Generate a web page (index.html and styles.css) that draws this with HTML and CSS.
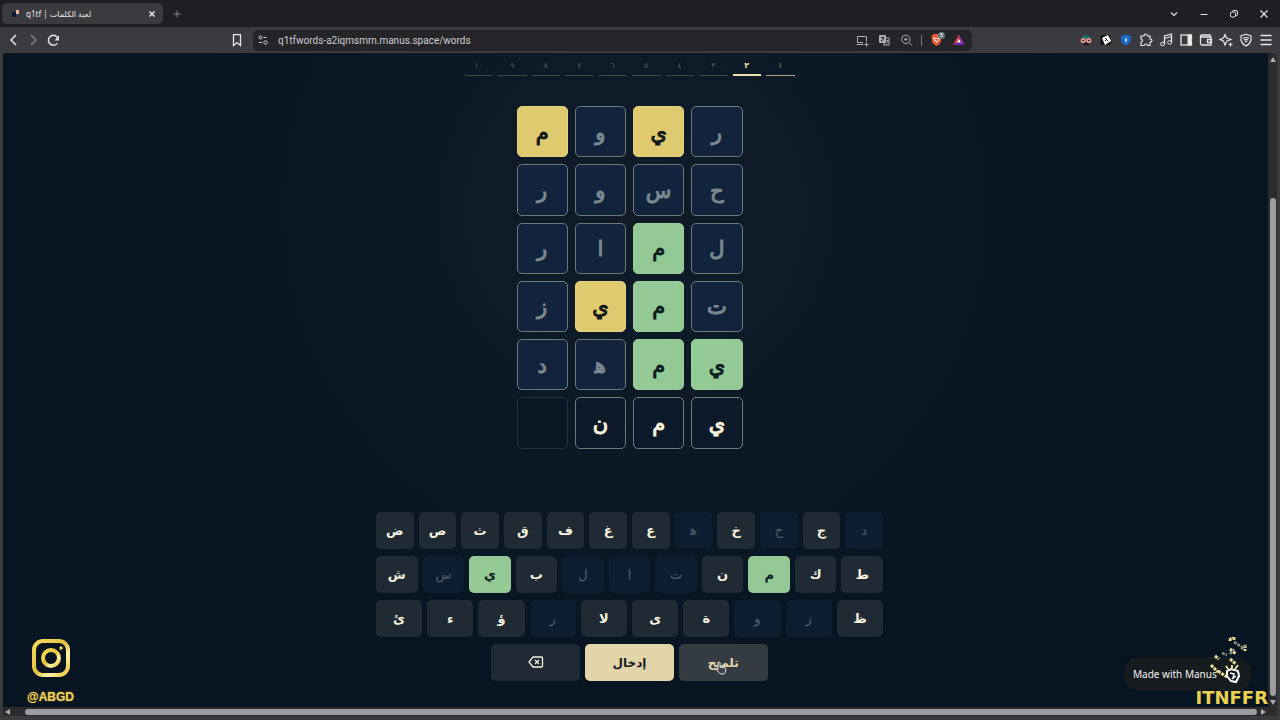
FILE: index.html
```html
<!DOCTYPE html>
<html lang="ar">
<head>
<meta charset="utf-8">
<meta name="viewport" content="width=device-width, initial-scale=1">
<title>لعبة الكلمات | q1tf</title>
<link rel="stylesheet" href="styles.css">
</head>
<body>
<div class="browser">
  <header class="tabs">
    <div class="tab">
      <svg class="favicon" viewBox="0 0 8 8" aria-hidden="true"><path fill="#091a30" d="M0 2h5v5H0z"/><path fill="#efb9a0" d="M4 0h3v4H4z"/><path fill="#263f5c" d="M4 4h3v2H4z"/></svg>
      <span class="tab-title" dir="ltr">q1tf | <bdi>لعبة الكلمات</bdi></span>
      <button class="icon-btn" aria-label="Close tab"><svg viewBox="0 0 16 16"><path stroke-width="1.500" d="M5.500 5.500l5 5M10.500 5.500l-5 5"/></svg></button>
    </div>
    <button class="icon-btn dim" aria-label="New tab"><svg viewBox="0 0 16 16"><path d="M8 4.500v7M4.500 8h7"/></svg></button>
    <div class="window-controls">
      <button class="icon-btn" aria-label="Search tabs"><svg viewBox="0 0 16 16"><path stroke-width="1.200" d="M5 6.500l3 3 3-3"/></svg></button>
      <button class="icon-btn" aria-label="Minimize"><svg viewBox="0 0 16 16"><path d="M4.500 8.500h7"/></svg></button>
      <button class="icon-btn" aria-label="Restore"><svg viewBox="0 0 16 16"><rect x="4.500" y="6" width="5" height="5" rx="1.200"/><path d="M6.500 6V5.500q0-1 1-1H10q1.500 0 1.500 1.500v2.500q0 1-1 1h-1"/></svg></button>
      <button class="icon-btn" aria-label="Close window"><svg viewBox="0 0 16 16"><path stroke-width="1.200" d="M4.500 4.500l7 7M11.500 4.500l-7 7"/></svg></button>
    </div>
  </header>

  <nav class="toolbar">
    <div class="nav-left">
      <button class="icon-btn" aria-label="Back"><svg viewBox="0 0 16 16"><path stroke-width="1.500" d="M10 3L5 8l5 5"/></svg></button>
      <button class="icon-btn dim" aria-label="Forward"><svg viewBox="0 0 16 16"><path stroke-width="1.300" d="M5 3l5 5-5 5"/></svg></button>
      <button class="icon-btn" aria-label="Reload"><svg viewBox="0 0 16 16"><path stroke-width="1.500" d="M12 6.300A5 5 0 1 0 11.300 11.400"/><path fill="currentColor" stroke="none" d="M13 3.500v5H8.500z"/></svg></button>
    </div>
    <button class="icon-btn" aria-label="Bookmark"><svg viewBox="0 0 16 16"><path stroke-width="1.300" d="M4.500 2.700h7v10.800L8 10.500l-3.500 3z"/></svg></button>
    <div class="address">
      <svg class="site" viewBox="0 0 16 16" aria-hidden="true"><circle cx="5.500" cy="5.500" r="1.500"/><path d="M8.500 5.500h3M4 10.500h3"/><circle cx="10.500" cy="10.500" r="1.700"/></svg>
      <input class="url" type="text" dir="ltr" aria-label="Address" value="q1tfwords-a2iqmsmm.manus.space/words">
      <div class="address-icons">
        <button class="icon-btn soft" aria-label="Install"><svg viewBox="0 0 16 16"><path d="M9 10.500H3.500v-6h9v5M2.500 12.500h7M12.500 10.500v4M10.500 12.500h4"/></svg></button>
        <button class="icon-btn soft" aria-label="Translate"><svg viewBox="0 0 16 16"><path fill="#aaa9ad" d="M3.500 3.500h6v7h-6z"/><path d="M9.500 6h3.500v7H7.500L9 10.500"/><path stroke="#26252b" d="M5 5.500h3M6.500 5v1.500M5 9q3-1 2.500-3.500"/><path d="M10.500 8.500h1.500q0 2-1.500 3"/></svg></button>
        <button class="icon-btn soft" aria-label="Zoom"><svg viewBox="0 0 16 16"><circle cx="7.800" cy="7.300" r="4.200"/><path d="M11 10.500l3 3M6 7.300h3.600M7.800 5.500v3.600"/></svg></button>
        <span class="separator"></span>
        <button class="icon-btn" aria-label="Brave Shields"><svg viewBox="0 0 16 16"><path fill="#ed562c" stroke="none" d="M4.500 2h6l2 2-.5 5.500-1.500 2.500L7.500 14l-3-2L3 9.500 2.500 4z"/><path stroke="#fff" d="M5 5.500l1.500 1L7.500 6l1 .5 1.500-1-.5 3-2 2-2-2zM6.500 8.500l1 1 1-1"/></svg><span class="badge">5</span></button>
        <button class="icon-btn" aria-label="Rewards"><svg viewBox="0 0 16 16"><path fill="#e7443b" stroke="none" d="M8 2.500L2 13h3l3-5z"/><path fill="#932a9c" stroke="none" d="M8 2.500L14 13h-3L8 8z"/><path fill="#6028a8" stroke="none" d="M2 13l3-2.500h6L14 13z"/><path fill="#fff" stroke="none" d="M8 7l2 3.500H6z"/></svg></button>
      </div>
    </div>
    <div class="extensions">
      <button class="icon-btn" aria-label="Extension"><svg viewBox="0 0 16 16"><path fill="#1b7468" stroke="none" d="M4 5q3.500-3.500 8 0v2H4z"/><path fill="#141619" stroke="none" d="M5 10h6l-1 3H6z"/><circle cx="5.200" cy="8.500" r="1.800" stroke-width="1.500" stroke="#f5a49c" fill="#26292c"/><circle cx="10.800" cy="8.500" r="1.800" stroke-width="1.500" stroke="#f5a49c" fill="#26292c"/></svg></button>
      <button class="icon-btn" aria-label="Dark mode"><svg viewBox="0 0 16 16"><path fill="#151519" stroke="none" d="M2.500 3h10v10h-10z"/><path fill="#fff" stroke="none" d="M4 6l6-3 3 6-6 4z"/><path stroke="#222" d="M7 6l3 3M7 9l2-2"/></svg></button>
      <button class="icon-btn" aria-label="Privacy guard"><svg viewBox="0 0 16 16"><path fill="#1768c8" stroke="none" d="M8 2.500l5 1.500v4q-1 4-5 5.500Q4 12 3 8V4z"/><path stroke="#fff" stroke-width="1.300" d="M8 6v4"/></svg></button>
      <button class="icon-btn" aria-label="Extensions"><svg viewBox="0 0 16 16"><path stroke-width="1.200" d="M3 4h3q0-2 1.700-2T9.500 4H12v3q2 0 2 1.600T12 10.300V13.500H9.500q0-1.500-1.600-1.500T6 13.500H3V10q1.500 0 1.500-1.500T3 7z"/></svg></button>
      <button class="icon-btn" aria-label="Media"><svg viewBox="0 0 16 16"><path stroke-width="1.300" d="M6.500 12V4l7-2v8.500M6.500 6.500l7-2"/><circle cx="4.600" cy="12" r="1.900"/><circle cx="11.600" cy="10.500" r="1.900"/></svg></button>
      <button class="icon-btn" aria-label="Sidebar"><svg viewBox="0 0 16 16"><rect x="3" y="3" width="10.500" height="10" stroke-width="1.300"/><path fill="#eee" d="M10 3h3.500v10H10z"/></svg></button>
      <button class="icon-btn" aria-label="Wallet"><svg viewBox="0 0 16 16"><path stroke-width="1.300" d="M12 5V3H4Q2.500 3 2.500 4.500v7Q2.500 13 4 13h9V5H3M13.500 7.500h-4v3h4z"/></svg></button>
      <button class="icon-btn" aria-label="Assistant"><svg viewBox="0 0 16 16"><path stroke-width="1.200" d="M7 2.500L8.500 6 13 7.500 9 9l-2 4-1.500-4L2 7.500 5.500 6zM12.500 10.500v4M10.500 12.500h4"/></svg></button>
      <button class="icon-btn" aria-label="VPN"><svg viewBox="0 0 16 16"><path stroke-width="1.200" d="M8 2.300L13 4v4q-1 4-5 6-4-2-5-6V4zM5 6.500q3-2 6 0M6 8q2-1.200 4 0"/><circle cx="8" cy="9.500" r=".7" fill="currentColor"/></svg></button>
      <button class="icon-btn" aria-label="Menu"><svg viewBox="0 0 16 16"><path stroke-width="1.500" d="M2.500 3.500h11M2.500 8h11M2.500 12.500h11"/></svg></button>
    </div>
  </nav>

  <div class="viewport">
    <main class="game" dir="rtl">
      <ol class="steps">
        <li class="done">١</li><li class="current">٢</li><li>٣</li><li>٤</li><li>٥</li><li>٦</li><li>٧</li><li>٨</li><li>٩</li><li>١٠</li>
      </ol>
      <section class="board" aria-label="لوحة الكلمات">
        <div class="cell miss">ر</div><div class="cell near">ي</div><div class="cell miss">و</div><div class="cell near">م</div>
        <div class="cell miss">ح</div><div class="cell miss">س</div><div class="cell miss">و</div><div class="cell miss">ر</div>
        <div class="cell miss">ل</div><div class="cell hit">م</div><div class="cell miss">ا</div><div class="cell miss">ر</div>
        <div class="cell miss">ت</div><div class="cell hit">م</div><div class="cell near">ي</div><div class="cell miss">ز</div>
        <div class="cell hit">ي</div><div class="cell hit">م</div><div class="cell miss">ه&zwj;</div><div class="cell miss">د</div>
        <div class="cell">ي</div><div class="cell">م</div><div class="cell">ن</div><div class="cell empty"></div>
      </section>
      <section class="keyboard" aria-label="لوحة المفاتيح">
        <div class="key-row">
          <button class="key used">د</button><button class="key">ج</button><button class="key used">ح</button><button class="key">خ</button><button class="key used">ه&zwj;</button><button class="key">ع</button><button class="key">غ</button><button class="key">ف</button><button class="key">ق</button><button class="key">ث</button><button class="key">ص</button><button class="key">ض</button>
        </div>
        <div class="key-row">
          <button class="key">ط</button><button class="key">ك</button><button class="key hit">م</button><button class="key">ن</button><button class="key used">ت</button><button class="key used">ا</button><button class="key used">ل</button><button class="key">ب</button><button class="key hit">ي</button><button class="key used">س</button><button class="key">ش</button>
        </div>
        <div class="key-row">
          <button class="key">ظ</button><button class="key used">ز</button><button class="key used">و</button><button class="key">ة</button><button class="key">ى</button><button class="key">لا</button><button class="key used">ر</button><button class="key">ؤ</button><button class="key">ء</button><button class="key">ئ</button>
        </div>
        <div class="key-row actions">
          <button class="key hint">تلميح</button><button class="key enter">إدخال</button><button class="key" aria-label="حذف"><svg class="erase" viewBox="0 0 16 14"><path d="M5 2h8.500q1 0 1 1v8q0 1-1 1H5L1 7zM7 5l4 4M11 5L7 9"/></svg></button>
        </div>
      </section>
    </main>
    <div class="scroll-y"><i class="arrow up"></i><span class="thumb"></span><i class="arrow down"></i></div>
    <div class="scroll-x"><i class="arrow left"></i><span class="thumb"></span><i class="arrow right"></i></div>
  </div>

  <svg class="cursor" viewBox="0 0 14 16" aria-hidden="true"><path d="M4 9V3q0-1 1-1t1 1v4l5 1q1 0 1 1.500L11 13q-.5 1-1.500 1H6.500L2 9.500q1-1 2 0z"/></svg>

  <div class="social">
    <svg class="camera" viewBox="0 0 40 40" aria-hidden="true">
      <defs><linearGradient id="gold" x2="1" y2="1"><stop stop-color="#f8dc61"/><stop offset=".5" stop-color="#e2c13d"/><stop offset=".7" stop-color="#fff3a9"/><stop offset="1" stop-color="#ecc437"/></linearGradient></defs>
      <rect x="3" y="3" width="34" height="34" rx="9" fill="#09131d" stroke="url(#gold)" stroke-width="4"/><circle cx="20" cy="20" r="8" fill="none" stroke="url(#gold)" stroke-width="4"/><circle cx="30" cy="10" r="1.700" fill="#f8dc61"/>
    </svg>
    <span class="handle">@ABGD</span>
  </div>
  <a class="made-with" href="#">Made with Manus</a>
  <div class="streamer">
    <svg class="confetti" viewBox="0 0 50 54" aria-hidden="true">
      <g fill="none" stroke="#e9df9d" stroke-width="3" stroke-dasharray="3 1"><path d="M23 6q0-4 6-2M23 14l6 5M23 24l6 5M4 30l7 7M11 36l9 6M8 21l4 3M38 10v6"/></g>
      <g fill="none" stroke="#8b9279" stroke-width="2.500" stroke-dasharray="3 1"><path d="M15 18l5 2M27 7l8 5M23 19l4-5M34 14l5-4"/></g>
      <path d="M20 36l4-2 7 2 1 5-3 6-5-1-4-5z" fill="#17191b" stroke="#fff" stroke-width="2"/><path d="M23 38l4 1-1 4M25 44l4-3" fill="none" stroke="#fff" stroke-width="1.500"/><path d="M21 34l-2-3M25 33v-3M28 34l3-4" stroke="#e9df9d" stroke-width="2"/>
    </svg>
    <span class="streamer-name">ITNFFR</span>
  </div>
</div>
</body>
</html>
```
FILE: styles.css
```css
* { box-sizing: border-box; }
body { margin: 0; background: #3b3a3e; font-family: "Noto Sans", "DejaVu Sans", sans-serif; }
button { font: inherit; border: 0; padding: 0; cursor: pointer; }
.browser { position: relative; height: 100vh; display: flex; flex-direction: column; overflow: hidden; }

.tabs { display: flex; align-items: center; height: 27px; padding: 0 8px 0 2px; background: #1f1e23; color: #e4e4e6; flex: none; }
.tab { display: flex; align-items: center; width: 161px; height: 21px; padding: 0 3px 0 10px; margin-right: 6px; border-radius: 5px; background: #3b3a3e; }
.favicon { width: 8px; height: 8px; margin-right: 6px; }
.tab-title { flex: 1; font-size: 8px; white-space: nowrap; }
.window-controls { display: flex; gap: 14px; margin-left: auto; }
.icon-btn { position: relative; display: block; flex: none; width: 16px; height: 16px; background: none; color: #e5e4e7; }
.icon-btn svg, .site { display: block; width: 16px; height: 16px; fill: none; stroke: currentColor; }
.dim { color: #89888d; }
.soft { color: #b0afb4; }

.toolbar { display: flex; align-items: center; height: 26px; padding: 0 6px; background: #3b3a3e; flex: none; }
.nav-left { display: flex; flex: 0 0 223px; gap: 4px; }
.address { display: flex; align-items: center; flex: 1; max-width: 719px; height: 21px; margin-left: 8px; padding: 0 5px 0 2px; border-radius: 5px; background: #252429; color: #d3d2d6; }
.url { flex: 1; min-width: 0; margin-left: 7px; padding: 0; border: 0; outline: 0; background: none; color: #cfced2; font: 10px Roboto, sans-serif; }
.address-icons { display: flex; align-items: center; gap: 6px; }
.separator { width: 1px; height: 11px; margin: 0 1px; background: #77767b; }
.badge { position: absolute; top: 0; right: 0; width: 7px; height: 7px; border-radius: 4px; background: #68747e; color: #fff; font-size: 6px; line-height: 7px; }
.extensions { display: flex; gap: 4px; margin-left: auto; }

.viewport { flex: 1; min-height: 0; margin: 0 3px 4px; display: grid; grid-template: minmax(0, 1fr) 9px / minmax(0, 1fr) 9px; background: #2b2b2e; border-radius: 3px 0 0 0; overflow: hidden; }
.game { display: flex; flex-direction: column; align-items: center; padding: 5px 12px 0 0; overflow: hidden; background: radial-gradient(circle at 50% 24%, #101b27 0, #0b1927 230px, #071522 500px); color: #f7f3dd; }
.steps { display: grid; grid-template-columns: repeat(10, 1fr); gap: 5px; width: 330px; margin: 0 0 30px; padding: 0; list-style: none; }
.steps li { height: 18px; border-bottom: 1px solid #3c4a50; color: #576167; font-size: 8px; line-height: 14px; text-align: center; }
.steps .done { border-color: #a9a477; color: #989578; }
.steps .current { border-bottom: 2px solid #eee1a7; color: #eee1a7; font-weight: 700; }

.board { display: grid; grid-template-columns: repeat(4, 1fr); gap: 7px; width: 226px; margin-bottom: 63px; }
.cell { display: flex; align-items: center; justify-content: center; aspect-ratio: 1; border: 1px solid #6d7976; border-radius: 5px; background: #0c1928; font-size: 21px; line-height: 24px; -webkit-text-stroke: 1px currentColor; }
.cell.miss { background: #12243d; color: #7b8990; }
.cell.near { background: #dfca70; border-color: #e5d27e; color: #101717; }
.cell.hit { background: #94c895; border-color: #9bd09a; color: #091c20; }
.cell.empty { border-color: #25343b; background: #0a1825; }

.keyboard { display: flex; flex-direction: column; align-items: center; gap: 7px; width: 507px; }
.key-row { display: flex; gap: 5px; width: 100%; }
.key { display: flex; align-items: center; justify-content: center; flex: 1; height: 37px; border-radius: 5px; background: #202a34; color: #f6f2df; font-size: 13px; font-weight: 700; }
.key.used { background: #0d1e33; color: #536070; font-weight: 400; }
.key.hit { background: #94c895; color: #0a2023; }
.actions { width: 276px; }
.key.hint { background: #343c42; color: #e3d5a8; font-size: 12px; }
.key.enter { background: #e3d5aa; color: #151b1f; font-size: 12px; }
.erase { width: 16px; height: 14px; fill: none; stroke: currentColor; stroke-width: 1.3; }

.thumb { background: #9d9c9e; border-radius: 4px; }
.scroll-y { display: flex; flex-direction: column; align-items: center; padding: 4px 0 2px; }
.scroll-y .thumb { flex: 1; width: 6px; margin: 136px 0 4px; }
.scroll-x { display: flex; align-items: center; padding: 0 2px; }
.scroll-x .thumb { flex: 1; height: 6px; margin: 0 4px 0 15px; }
.arrow { width: 0; height: 0; border: 3px solid transparent; }
.up { border-bottom: 5px solid #aaa; border-top: 0; }
.down { border-top: 5px solid #aaa; border-bottom: 0; }
.left { border-right: 5px solid #aaa; border-left: 0; }
.right { border-left: 5px solid #aaa; border-right: 0; }

/* Stream overlays */
.cursor { position: absolute; left: 714px; top: 660px; width: 14px; height: 16px; fill: #3c4449; stroke: #e5e5df; pointer-events: none; }
.social { position: absolute; left: 28px; bottom: 14px; display: flex; flex-direction: column; align-items: center; gap: 10px; width: 45px; }
.camera { width: 40px; height: 40px; }
.handle { color: #f3d669; font: 700 12px/18px "Liberation Sans", sans-serif; text-shadow: 0 0 2px #987410; }
.made-with { position: absolute; right: 28px; bottom: 29px; width: 129px; padding: 8px 10px; border-radius: 17px; background: #161b1f; color: #f3f3f1; font: 10px/18px "Noto Sans", sans-serif; text-decoration: none; }
.streamer { position: absolute; right: 12px; bottom: 14px; display: flex; flex-direction: column; align-items: center; }
.confetti { width: 50px; height: 54px; }
.streamer-name { color: #ebd151; font: 700 18px/17px "DejaVu Sans", sans-serif; }
```
